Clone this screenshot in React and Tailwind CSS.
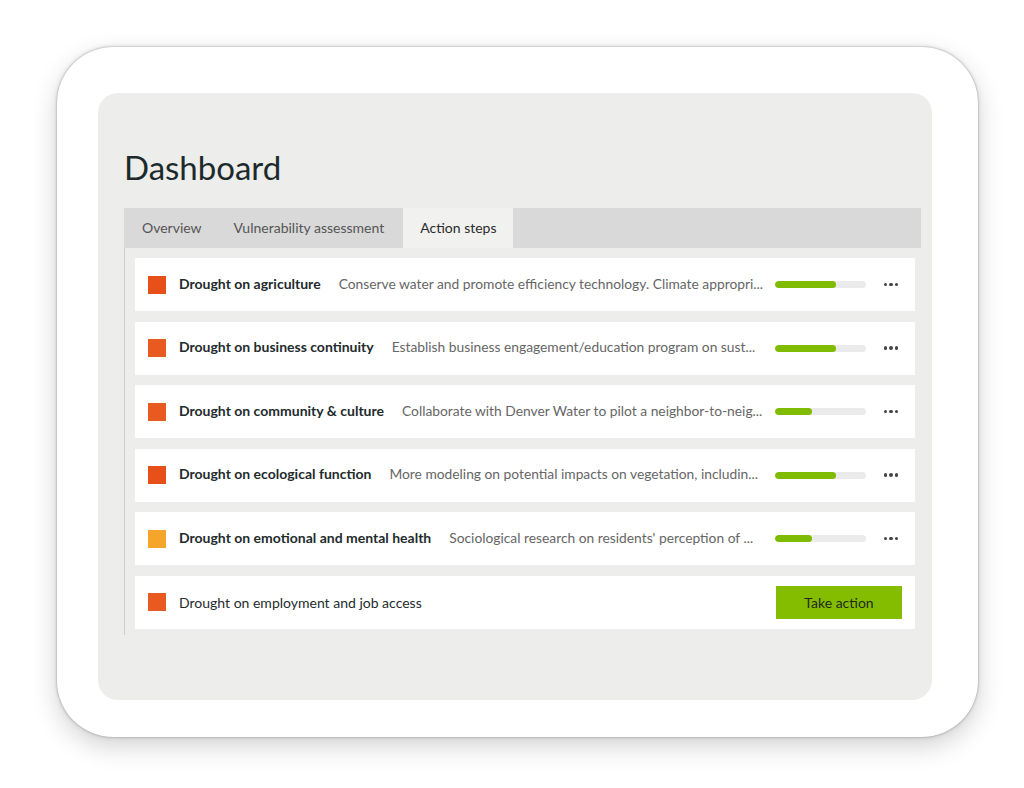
import React from "react";

const rows = [
  { title: "Drought on agriculture", desc: "Conserve water and promote efficiency technology. Climate appropri...", color: "bg-[#e8501a]", progress: 67 },
  { title: "Drought on business continuity", desc: "Establish business engagement/education program on sust...", color: "bg-[#e85a20]", progress: 67 },
  { title: "Drought on community & culture", desc: "Collaborate with Denver Water to pilot a neighbor-to-neig...", color: "bg-[#e85a20]", progress: 41 },
  { title: "Drought on ecological function", desc: "More modeling on potential impacts on vegetation, includin...", color: "bg-[#e8501a]", progress: 67 },
  { title: "Drought on emotional and mental health", desc: "Sociological research on residents' perception of ...", color: "bg-[#f5a62a]", progress: 41 },
];

const font = { fontFamily: "Lato, 'Open Sans', sans-serif" };

const Row = ({ row }) => (
  <div className="h-[53px] bg-white flex items-center pl-[13px] pr-[17px]">
    <div className={`w-[18px] h-[18px] shrink-0 ${row.color}`} />
    <span className="ml-[13px] shrink-0 text-[14px] leading-[18px] pb-[2px] font-bold text-[#232b2d]">{row.title}</span>
    <span className="ml-[18px] min-w-0 flex-1 overflow-hidden whitespace-nowrap text-[13.8px] leading-[18px] pb-[2px] text-[#666]">{row.desc}</span>
    <div className="ml-[10px] w-[91px] h-[7px] shrink-0 rounded-full bg-[#ebebeb] overflow-hidden">
      <div className="h-full rounded-full bg-[#7fbb00]" style={{ width: `${row.progress}%` }} />
    </div>
    <span className="ml-[18px] w-[14px] shrink-0 flex gap-[2px] items-center">
      <span className="w-[3.5px] h-[3.5px] rounded-full bg-[#444]" />
      <span className="w-[3.5px] h-[3.5px] rounded-full bg-[#444]" />
      <span className="w-[3.5px] h-[3.5px] rounded-full bg-[#444]" />
    </span>
  </div>
);

const App = () => {
  return (
    <div className="w-[1024px] h-[788px] bg-white overflow-hidden pt-[47px] pl-[57px]" style={font}>
      <div className="w-[921px] h-[690px] rounded-[56px] bg-white pt-[46px] pl-[41px] shadow-[0_0_2px_rgba(0,0,0,0.35),0_0_5px_rgba(0,0,0,0.12),0_9px_26px_rgba(0,0,0,0.18)]">
        <div className="w-[834px] h-[607px] rounded-[20px] bg-[#ededeb] pl-[26px] pr-[11px] pt-[53px]">
          <h1 className="text-[33px] leading-[42px] text-[#1d2a2b]">Dashboard</h1>
          <div className="mt-[20px] h-[40px] bg-[#d9d9d9] flex text-[14px] text-[#555]">
            <div className="pl-[18px] pr-[16px] pb-[2px] flex items-center">Overview</div>
            <div className="px-[16px] pb-[2px] flex items-center">Vulnerability assessment</div>
            <div className="ml-[3px] pl-[17px] pr-[16px] pb-[2px] flex items-center bg-[#f1f1f0] text-[#2b2b2b]">Action steps</div>
          </div>
          <div className="border-l border-[#cfcfcf] pl-[10px] pr-[6px] pt-[10px] pb-[6px] flex flex-col gap-[10.5px]">
            {rows.map((row) => (
              <Row key={row.title} row={row} />
            ))}
            <div className="h-[53px] bg-white flex items-center pl-[13px] pr-[13px]">
              <div className="w-[18px] h-[18px] shrink-0 bg-[#e85a20]" />
              <span className="ml-[13px] flex-1 text-[14px] text-[#232b2d]">Drought on employment and job access</span>
              <button className="w-[126px] h-[33px] bg-[#84bd00] text-[14px] text-[#1f2a1a]">Take action</button>
            </div>
          </div>
        </div>
      </div>
    </div>
  );
};

export default App;
